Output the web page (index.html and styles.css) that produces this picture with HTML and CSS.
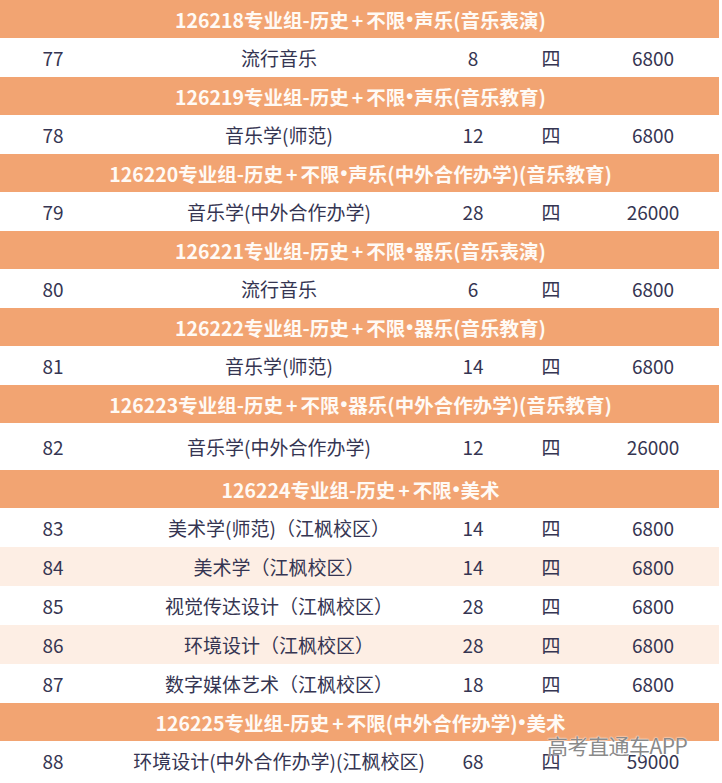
FILE: index.html
```html
<!DOCTYPE html>
<html lang="zh">
<head>
<meta charset="utf-8">
<link rel="stylesheet" href="styles.css">
</head>
<body>
<div class="page">
  <div class="table">
    <div class="row head">126218专业组-历史<span class="op">+</span>不限<span class="dot">•</span>声乐(音乐表演)</div>
    <div class="row data"><span>77</span><span>流行音乐</span><span>8</span><span>四</span><span>6800</span></div>
    <div class="row head">126219专业组-历史<span class="op">+</span>不限<span class="dot">•</span>声乐(音乐教育)</div>
    <div class="row data"><span>78</span><span>音乐学(师范)</span><span>12</span><span>四</span><span>6800</span></div>
    <div class="row head">126220专业组-历史<span class="op">+</span>不限<span class="dot">•</span>声乐(中外合作办学)(音乐教育)</div>
    <div class="row data"><span>79</span><span>音乐学(中外合作办学)</span><span>28</span><span>四</span><span>26000</span></div>
    <div class="row head">126221专业组-历史<span class="op">+</span>不限<span class="dot">•</span>器乐(音乐表演)</div>
    <div class="row data"><span>80</span><span>流行音乐</span><span>6</span><span>四</span><span>6800</span></div>
    <div class="row head">126222专业组-历史<span class="op">+</span>不限<span class="dot">•</span>器乐(音乐教育)</div>
    <div class="row data"><span>81</span><span>音乐学(师范)</span><span>14</span><span>四</span><span>6800</span></div>
    <div class="row head">126223专业组-历史<span class="op">+</span>不限<span class="dot">•</span>器乐(中外合作办学)(音乐教育)</div>
    <div class="row data tall"><span>82</span><span>音乐学(中外合作办学)</span><span>12</span><span>四</span><span>26000</span></div>
    <div class="row head">126224专业组-历史<span class="op">+</span>不限<span class="dot">•</span>美术</div>
    <div class="row data"><span>83</span><span>美术学(师范)（江枫校区）</span><span>14</span><span>四</span><span>6800</span></div>
    <div class="row data alt"><span>84</span><span>美术学（江枫校区）</span><span>14</span><span>四</span><span>6800</span></div>
    <div class="row data"><span>85</span><span>视觉传达设计（江枫校区）</span><span>28</span><span>四</span><span>6800</span></div>
    <div class="row data alt"><span>86</span><span>环境设计（江枫校区）</span><span>28</span><span>四</span><span>6800</span></div>
    <div class="row data"><span>87</span><span>数字媒体艺术（江枫校区）</span><span>18</span><span>四</span><span>6800</span></div>
    <div class="row head">126225专业组-历史<span class="op">+</span>不限(中外合作办学)<span class="dot">•</span>美术</div>
    <div class="row data"><span>88</span><span>环境设计(中外合作办学)(江枫校区)</span><span>68</span><span>四</span><span>59000</span></div>
  </div>
  <div class="watermark">高考直通车APP</div>
</div>
</body>
</html>
```

FILE: styles.css
```css
html, body {
  margin: 0;
  padding: 0;
  background: #ffffff;
}
.page {
  position: relative;
  width: 722px;
  height: 783px;
  overflow: hidden;
  font-family: "Noto Sans CJK SC", "Noto Sans", sans-serif;
}
.table {
  width: 719px;
  display: flex;
  flex-direction: column;
}
.row {
  box-sizing: border-box;
}
.head {
  height: 38px;
  background: #f2a472;
  color: #fffaf5;
  font-weight: 700;
  font-size: 19.5px;
  display: flex;
  align-items: center;
  justify-content: center;
  padding-left: 2px;
  white-space: pre;
}
.head .op {
  margin: 0 3px;
}
.head .dot {
  font-family: "Liberation Sans", sans-serif;
  margin: 0 1px;
}
.data {
  height: 39px;
  background: #ffffff;
  color: #353552;
  font-size: 19px;
  display: grid;
  grid-template-columns: 106px 346px 42px 114px 90px 21px;
  align-items: center;
  text-align: center;
}
.data.tall {
  height: 47px;
}
.data.alt {
  background: #fdeee4;
}
.watermark {
  position: absolute;
  left: 547px;
  top: 730px;
  font-size: 21px;
  color: #8a8a8a;
  letter-spacing: -0.5px;
  text-shadow: 0 0 1px #fff, 0 0 2px #fff;
  font-family: "Noto Sans CJK SC", "Noto Sans", sans-serif;
  white-space: nowrap;
}
```
